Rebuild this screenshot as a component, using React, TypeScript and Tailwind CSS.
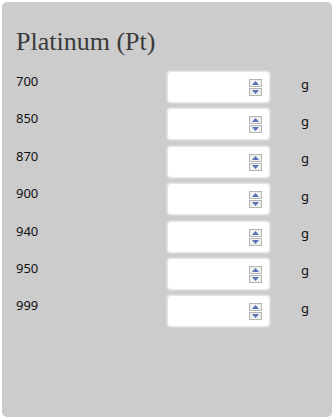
import React from "react";

const rows = ["700", "850", "870", "900", "940", "950", "999"];

function Spinner() {
  return (
    <div className="absolute right-[7px] top-[7px] flex flex-col gap-[1px]">
      <div className="w-[13px] h-[8px] border border-[#b4b4b4] bg-[#f0f0f0] flex items-center justify-center">
        <svg width="7" height="4" viewBox="0 0 7 4"><path d="M3.5 0 L7 4 L0 4 Z" fill="#5a6fb5" /></svg>
      </div>
      <div className="w-[13px] h-[8px] border border-[#b4b4b4] bg-[#f0f0f0] flex items-center justify-center">
        <svg width="7" height="4" viewBox="0 0 7 4"><path d="M0 0 L7 0 L3.5 4 Z" fill="#5a6fb5" /></svg>
      </div>
    </div>
  );
}

export default function App() {
  return (
    <div className="w-[334px] h-[419px] bg-white p-[2px]">
      <div className="w-full h-full bg-[#cccccc] rounded-[5px] pl-[14px] pr-[2px] pt-[24px]">
        <h1 className="text-[26px] leading-[32px] text-[#3a3a3a] mb-[13px]" style={{ fontFamily: '"Liberation Serif", serif' }}>
          Platinum (Pt)
        </h1>
        <div className="flex flex-col gap-[5.4px]" style={{ fontFamily: '"Noto Sans", sans-serif' }}>
          {rows.map((r) => (
            <div key={r} className="flex items-start h-[32px]">
              <div className="flex-1 text-[13px] leading-[18px] text-[#111] pt-[1px]">{r}</div>
              <div className="relative w-[103px] h-[32px] bg-white rounded-[4px] shadow-[0_0_2px_rgba(255,255,255,0.9)] border border-[#e6e6e6]">
                <Spinner />
              </div>
              <div className="w-[60px] h-[32px] flex items-center pl-[31px] text-[13px] leading-[18px] text-[#111] pb-[7px]">g</div>
            </div>
          ))}
        </div>
      </div>
    </div>
  );
}
